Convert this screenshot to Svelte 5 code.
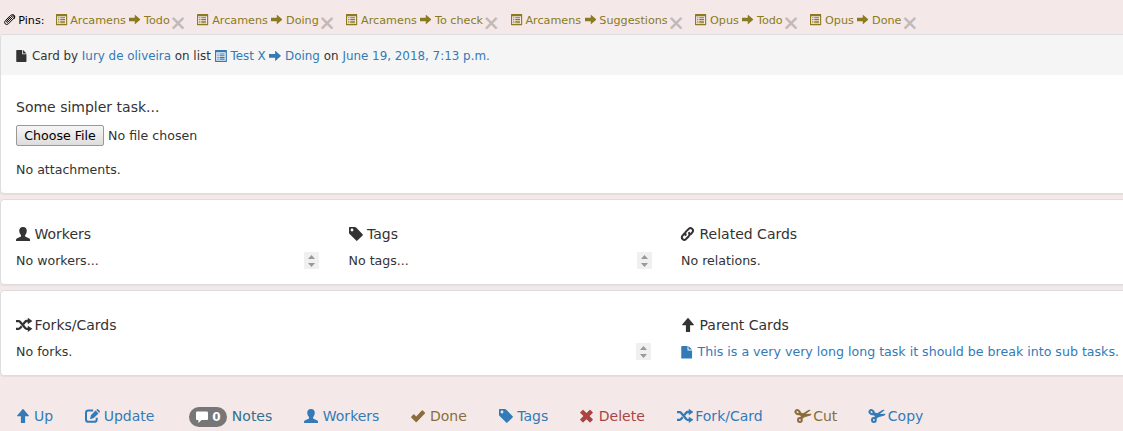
<script>
  const pins = [
    ['Arcamens', 'Todo'], ['Arcamens', 'Doing'], ['Arcamens', 'To check'],
    ['Arcamens', 'Suggestions'], ['Opus', 'Todo'], ['Opus', 'Done']
  ];
  const actions = [
    { icon: 'up', label: 'Up' },
    { icon: 'edit', label: 'Update' },
    { icon: 'comment', label: 'Notes', count: 0, tone: 'notes' },
    { icon: 'user', label: 'Workers' },
    { icon: 'ok', label: 'Done', tone: 'brown' },
    { icon: 'tag', label: 'Tags' },
    { icon: 'remove', label: 'Delete', tone: 'red' },
    { icon: 'random', label: 'Fork/Card' },
    { icon: 'cut', label: 'Cut', tone: 'brown' },
    { icon: 'cut', label: 'Copy' }
  ];
</script>

{#snippet icon(name)}
  <svg class="icon" viewBox="0 0 14 14" aria-hidden="true">
    {#if name === 'list'}
      <path fill-rule="evenodd" d="M.5 0h13q.5 0 .5.5v13q0 .5-.5.5H.5q-.5 0-.5-.5V.5Q0 0 .5 0ZM1.4 2.7v9.9h11.2V2.7Z" />
      <path d="M2.8 4h1.4v1.3H2.8zM5.3 4h6v1.3h-6zM2.8 6.2h1.4v1.3H2.8zM5.3 6.2h6v1.3h-6zM2.8 8.3h1.4v1.3H2.8zM5.3 8.3h6v1.3h-6zM2.8 10.4h1.4v1.2H2.8zM5.3 10.4h6v1.2h-6z" />
    {:else if name === 'right'}
      <path d="M0 4.8h7.2V1.3q0-.6.6-.1l5.9 5.2q.5.5 0 1l-5.9 5.2q-.6.5-.6-.1V9.1H0Z" />
    {:else if name === 'up'}
      <path d="M4.9 14V7.2H1.5q-.8 0-.3-.6L6.5.3q.5-.5 1 0l5.3 6.3q.5.6-.3.6H9.1V14Z" />
    {:else if name === 'file'}
      <path d="M1 0h6.3v5h5v8.3q0 .7-.7.7H1q-.7 0-.7-.7V.7Q.3 0 1 0ZM8.3 0l4 4h-4Z" />
    {:else if name === 'clip'}
      <path class="line" d="M3.3 9.3 9.7 2.9Q11.2 1.5 12.5 2.7q1.1 1.3-.2 2.7l-6.6 6.7Q3.4 14.1 1.5 12.4-.2 10.4 1.8 8.2L7.9 2M10.9 4.1 5.1 10q-.9.8-1.6.2-.6-.8.2-1.6l4.8-4.9M8 2Q10.7-.4 12.7 1.5t-.4 4.8" />
    {:else if name === 'user'}
      <path d="M7 0q3.7 0 3.8 3.8Q10.8 6 9.4 7.8q-.4.6-.3 1.2.1.8 1 1.1l2.8 1.1q1 .4 1.1 1.4l.1 1.4H0l.1-1.4q.1-1 1.1-1.4L4 10.1q.9-.3 1-1.1.1-.6-.3-1.2Q3.2 6 3.2 3.8 3.3 0 7 0Z" />
    {:else if name === 'tag'}
      <path fill-rule="evenodd" d="M.6 0h5.1q.8 0 1.4.6l6.5 6.6q.6.6 0 1.2l-5.2 5.2q-.6.6-1.2 0L.6 7.1Q0 6.5 0 5.7V.6Q0 0 .6 0ZM3 1.6a1.4 1.4 0 1 0 0 2.8 1.4 1.4 0 0 0 0-2.8Z" />
    {:else if name === 'link'}
      <path class="link" d="M5.1 8.6Q3.3 6.4 4.9 4.6L7.9 1.7q1.5-1.3 3.2.1t.4 3.4L9.2 7.7M7.6 5.2q1.8 2.2.2 4L4.8 12.3q-1.5 1.3-3.1-.1t-.3-3.4l2.3-2.5" />
    {:else if name === 'random'}
      <path class="shuffle" d="M0 3.1h2.7q.8 0 1.3.6l5.2 6.4q.6.7 1.4.7h2.1M0 10.8h2.7q.8 0 1.4-.7L5.6 8.2M7.4 5.9 9.2 3.7q.6-.7 1.4-.7h2.1" />
      <path d="M11.8-.2 16.4 3l-4.6 3.3Zm0 7.9 4.6 3.1-4.6 3.3Z" />
    {:else if name === 'edit'}
      <path class="edit" d="M8.2 1.5H3.4Q1 1.5 1 3.9v6.5q0 2.4 2.4 2.4h5.9q2.4 0 2.4-2.4V8.8" />
      <path d="m5 10.2.9-4L10.6 1.5l2.9 2.9L8.8 9.1ZM11.3.9 12 .2q.5-.4 1 0l1.8 1.7q.4.5 0 1l-.7.8Z" />
    {:else if name === 'comment'}
      <path d="M1.2.7h11.6q1.2 0 1.2 1.2v7.5q0 1.2-1.2 1.2H6.5L2.8 14v-3.4H1.2Q0 10.6 0 9.4V1.9Q0 .7 1.2.7Z" />
    {:else if name === 'ok'}
      <path d="m.2 7.7 2.2-2.2q.5-.5 1 0l1.8 1.9 5.6-5.9q.5-.5 1 0L13.9 3.5q.5.5 0 1L5.7 12.9q-.5.5-1 0L.2 8.6q-.5-.4 0-.9Z" />
    {:else if name === 'remove'}
      <path d="m3.4.9 3.1 3.1L9.6.9q.4-.4.8 0l2.3 2.3q.4.4 0 .8L9.6 7.1l3.1 3.1q.4.4 0 .8l-2.3 2.3q-.4.4-.8 0L6.5 10.2l-3.1 3.1q-.4.4-.8 0L.3 11q-.4-.4 0-.8l3.1-3.1L.3 4q-.4-.4 0-.8L2.6.9q.4-.4.8 0Z" />
    {:else if name === 'cut'}
      <ellipse class="blade" cx="2.6" cy="3.1" rx="2.2" ry="1.8" transform="rotate(40 2.6 3.1)" />
      <ellipse class="blade" cx="4.9" cy="11" rx="1.9" ry="2" />
      <path d="M4.3 3 8.2 4.2 13.4.9q1-.5 2.4.1L10.8 4.9l5.5-.1q.2 1.3-.8 1.7L9.5 8.2 6.8 10 4.6 9.1l1.4-2.2-3.1-1.2Z" />
    {/if}
  </svg>
{/snippet}

{#snippet spinner()}
  <svg class="spinner" viewBox="0 0 15 17" aria-hidden="true">
    <rect width="15" height="17" fill="#f0f0f0" />
    <path d="M4 7 7.5 3 11 7ZM4 11h7l-3.5 4Z" fill="#999" />
  </svg>
{/snippet}

<div class="page">
  <nav class="pins">
    <span class="pins-label">{@render icon('clip')}<span>Pins:</span></span>
    {#each pins as [board, list]}
      <span class="pin">
        {@render icon('list')}<span class="board">{board}</span>{@render icon('right')}<span class="target">{list}</span><button class="close">×</button>
      </span>
    {/each}
  </nav>

  <section class="panel first">
    <header>
      {@render icon('file')}<span class="by">Card by <a>Iury de oliveira</a> on list</span>
      <a class="ref">{@render icon('list')}<span>Test X</span>{@render icon('right')}<span>Doing</span></a>
      <span>on <a>June 19, 2018, 7:13 p.m.</a></span>
    </header>
    <div class="content">
      <h4>Some simpler task...</h4>
      <div class="upload"><button class="choose">Choose File</button><span>No file chosen</span></div>
      <p>No attachments.</p>
    </div>
  </section>

  <section class="panel columns">
    <div class="col">
      <h4>{@render icon('user')}Workers</h4>
      <div class="line-row"><span>No workers...</span>{@render spinner()}</div>
    </div>
    <div class="col">
      <h4>{@render icon('tag')}Tags</h4>
      <div class="line-row"><span>No tags...</span>{@render spinner()}</div>
    </div>
    <div class="col last">
      <h4>{@render icon('link')}Related Cards</h4>
      <div class="line-row"><span>No relations.</span></div>
    </div>
  </section>

  <section class="panel columns">
    <div class="col wide">
      <h4>{@render icon('random')}Forks/Cards</h4>
      <div class="line-row"><span>No forks.</span>{@render spinner()}</div>
    </div>
    <div class="col last">
      <h4>{@render icon('up')}Parent Cards</h4>
      <div class="line-row"><a class="parent">{@render icon('file')}<span>This is a very very long long task it should be break into sub tasks.</span></a></div>
    </div>
  </section>

  <footer>
    {#each actions as a}
      <a class="action {a.tone ?? ''}">
        {#if a.count !== undefined}
          <span class="badge">{@render icon(a.icon)}<span>{a.count}</span></span>
        {:else}
          {@render icon(a.icon)}
        {/if}
        <span>{a.label}</span>
      </a>
    {/each}
  </footer>
</div>

<style>
  :global(body) { background: #f4e9e8; overflow: hidden; }
  .page {
    width: 1123px; height: 431px; overflow: hidden;
    font: 12.6px/20px "DejaVu Sans", sans-serif; color: #333;
    white-space: nowrap; background: #f4e9e8;
  }
  .icon { width: 1em; height: 1em; flex: none; overflow: visible; fill: currentColor; }
  .icon .line, .icon .link, .icon .shuffle, .icon .edit, .icon .blade { fill: none; stroke: currentColor; }
  .icon .line { stroke-width: 1.2; }
  .icon .link { stroke-width: 2; }
  .icon .shuffle { stroke-width: 2.3; }
  .icon .edit { stroke-width: 2; }
  .icon .blade { stroke-width: 2; }
  a { color: #337ab7; }
  button { font: inherit; }

  .pins { display: flex; height: 34px; padding: 6px 0 0 4px; box-sizing: border-box; font-size: 11.2px; align-items: flex-start; }
  .pins-label, .pin { display: flex; align-items: center; height: 28px; }
  .pins-label { color: #000; width: 51.5px; gap: 3px; }
  .pins-label > span, .pin > span { padding-top: 1px; }
  .pin { color: #8a7a20; margin-right: 10.5px; }
  .pin .board { margin: 0 3.5px; }
  .pin .target { margin-left: 3.5px; }
  .close { border: 0; padding: 0; background: none; color: #000; opacity: .2; font-size: 21px; font-weight: 700; line-height: 21px; margin: 7px 0 0 -.5px; text-shadow: 0 1px 0 #fff; }

  .panel { box-sizing: border-box; width: 1133px; height: 86px; margin-bottom: 5px; border: 1px solid #ddd; border-radius: 4px; background: #fff; box-shadow: 0 1px 1px rgba(0,0,0,.05); }
  .first { height: 160px; }
  header { display: flex; align-items: center; height: 40px; padding: 1px 15px 0; box-sizing: border-box; background: #f5f5f5; border-radius: 3px 3px 0 0; font-size: 11.9px; gap: 4px; }
  .ref { display: flex; align-items: center; gap: 3.7px; }
  .content { padding: 22px 15px 0; }
  h4 { margin: 0; height: 20px; font-size: 14px; font-weight: 400; display: flex; align-items: center; gap: 4.5px; }
  .upload { display: flex; align-items: center; margin: 8px 0 14px; gap: 4px; }
  .choose { height: 21px; width: 88px; padding: 0; color: #000; line-height: 17px; border: 1px solid #999; border-radius: 2px; background: linear-gradient(#f6f6f6, #ddd); }
  p { margin: 0; }

  .columns { display: flex; padding: 24px 0 0; }
  .col { width: 332.5px; padding: 0 14.5px 0 15px; box-sizing: border-box; }
  .col.wide { width: 665px; padding-right: 15px; }
  .col.last { flex: 1; padding-right: 0; }
  .line-row { display: flex; align-items: center; justify-content: space-between; height: 20px; margin-top: 7px; }
  .spinner { width: 15px; height: 17px; flex: none; margin-bottom: 1px; }
  .parent { display: flex; align-items: center; gap: 4px; }

  footer { display: flex; gap: 32px; height: 20px; padding: 25px 15.5px 0; font-size: 14px; }
  .action { display: flex; align-items: center; gap: 4.5px; }
  .notes { color: #31708f; margin-left: 3px; }
  .brown { color: #8a6d3b; }
  .red { color: #a94442; }
  .badge { display: flex; align-items: center; justify-content: center; gap: 4px; width: 38px; height: 20px; margin-top: 2px; border-radius: 10px; background: #777; color: #fff; font-size: 12px; font-weight: 700; }
</style>
